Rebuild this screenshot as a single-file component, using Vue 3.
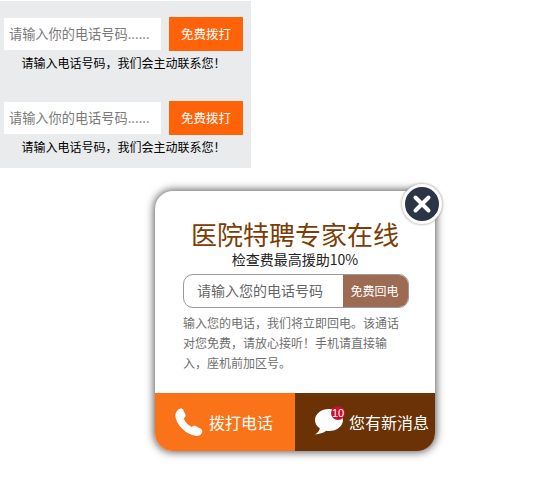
<script setup>
const forms = [1, 2]
</script>

<template>
  <div class="page">
    <section class="panel">
      <div v-for="f in forms" :key="f" class="form">
        <div class="row">
          <div class="field">请输入你的电话号码......</div>
          <div class="go">免费拨打</div>
        </div>
        <p class="caption">请输入电话号码，我们会主动联系您！</p>
      </div>
    </section>

    <section class="popup">
      <div class="close">
        <svg width="20" height="20" viewBox="0 0 20 20">
          <path d="M3.500 3.500 16.500 16.500M16.500 3.500 3.500 16.500" stroke="#fff" stroke-width="4" stroke-linecap="round" fill="none" />
        </svg>
      </div>
      <div class="body">
        <h1 class="title">医院特聘专家在线</h1>
        <p class="sub">检查费最高援助10%</p>
        <div class="callback">
          <div class="cb-input">请输入您的电话号码</div>
          <div class="cb-btn">免费回电</div>
        </div>
        <p class="desc">输入您的电话，我们将立即回电。该通话对您免费，请放心接听！手机请直接输入，座机前加区号。</p>
      </div>
      <div class="foot">
        <div class="foot-call">
          <svg width="30" height="30" viewBox="0 0 30 30">
            <path d="M4.500 2.500C6.500 1 8.500 1.200 9.300 3L11.500 7.800C12 9 11.300 10.300 9.700 11.300C10.800 14.500 14 18.400 17.800 20C18.800 18.900 20.300 18.400 21.600 19L26.800 21.800C28.600 22.900 28.800 25 27.400 26.800C26 28.500 24 29.300 22 29C12 27.500 2.500 18 1.300 9C1 6.500 2.500 4 4.500 2.500Z" fill="#fff" />
          </svg>
          <span>拨打电话</span>
        </div>
        <div class="foot-msg">
          <div class="bubble">
            <svg width="30" height="28" viewBox="0 0 30 28">
              <path d="M15 1C7.300 1 1 5.900 1 12C1 15.400 2.800 18.300 5.800 20.300C5.600 22.400 4 24.800 1 26.500C5.500 26.300 9.500 24.800 12.300 22.800C13.200 22.900 14.100 23 15 23C22.700 23 29 18.100 29 12C29 5.900 22.700 1 15 1Z" fill="#fff" />
            </svg>
            <span class="badge">10</span>
          </div>
          <span>您有新消息</span>
        </div>
      </div>
    </section>
  </div>
</template>

<style scoped>
.page {
  width: 546px;
  height: 483px;
  overflow: hidden;
  font-family: "Noto Sans CJK SC", "Liberation Sans", sans-serif;
}
p, h1 { margin: 0; }
.panel {
  width: 251px;
  height: 168px;
  background: #e9ebec;
  border-top: 1px solid #fff;
  padding-top: 16px;
  box-sizing: border-box;
}
.form { height: 84px; }
.row {
  display: flex;
  align-items: center;
  padding-left: 4px;
  gap: 8px;
}
.field {
  width: 157px;
  height: 32px;
  background: #fff;
  color: #7a7a7a;
  font-size: 13.200px;
  line-height: 32px;
  padding-left: 5px;
  box-sizing: border-box;
  white-space: nowrap;
  overflow: hidden;
}
.go {
  width: 74px;
  height: 34px;
  background: #ff6309;
  color: #fff;
  font-size: 12.500px;
  line-height: 34px;
  text-align: center;
}
.caption {
  width: 247px;
  margin-top: 3px;
  color: #000;
  font-size: 12px;
  line-height: 18px;
  text-align: center;
  font-weight: 400;
}
.popup {
  position: relative;
  width: 280px;
  height: 260px;
  margin: 23px 0 0 155px;
  background: #fff;
  border-radius: 18px;
  box-shadow: 0 0 8px 1px #555;
  display: flex;
  flex-direction: column;
}
.close {
  position: absolute;
  top: -7px;
  right: -7px;
  width: 34px;
  height: 34px;
  border-radius: 50%;
  background: #2b3547;
  border: 3px solid #fff;
  box-shadow: 0 0 3px #888;
  display: flex;
  align-items: center;
  justify-content: center;
}
.body {
  flex: 1;
  padding: 27px 28px 0 28px;
}
.title {
  color: #7b3d05;
  font-size: 26px;
  font-weight: 400;
  line-height: 32px;
  text-align: center;
  margin: 0 -4px 0 -4px;
}
.sub {
  color: #222;
  font-size: 14px;
  line-height: 18px;
  text-align: center;
}
.callback {
  display: flex;
  width: 226px;
  height: 34px;
  margin-top: 6px;
  box-sizing: border-box;
  border: 1px solid #9a9a9a;
  border-radius: 10px;
  overflow: hidden;
}
.cb-input {
  flex: 1;
  color: #666;
  font-size: 14px;
  line-height: 31px;
  padding-left: 13px;
}
.cb-btn {
  width: 65px;
  box-sizing: border-box;
  padding-right: 2px;
  background: #9c6b51;
  color: #fff;
  font-size: 12px;
  line-height: 31px;
  text-align: center;
}
.desc {
  color: #6f6f6f;
  font-size: 12px;
  line-height: 20px;
  margin-top: 5px;
  width: 218px;
}
.foot {
  display: flex;
  height: 58px;
  border-radius: 0 0 18px 18px;
  overflow: hidden;
  color: #fff;
  font-size: 16px;
  line-height: 22px;
}
.foot-call, .foot-msg {
  width: 140px;
  display: flex;
  align-items: center;
  box-sizing: border-box;
  padding-left: 19px;
}
.foot-call {
  background: #fb7318;
  gap: 5px;
}
.foot-msg {
  background: #6b3205;
  gap: 5px;
  white-space: nowrap;
}
.bubble {
  position: relative;
  width: 30px;
  height: 28px;
}
.badge {
  position: absolute;
  top: -2px;
  left: 17px;
  width: 14px;
  height: 14px;
  border-radius: 50%;
  background: #c8102e;
  color: #fff;
  font-size: 11px;
  line-height: 14px;
  text-align: center;
  font-family: "Liberation Sans", sans-serif;
}
</style>
